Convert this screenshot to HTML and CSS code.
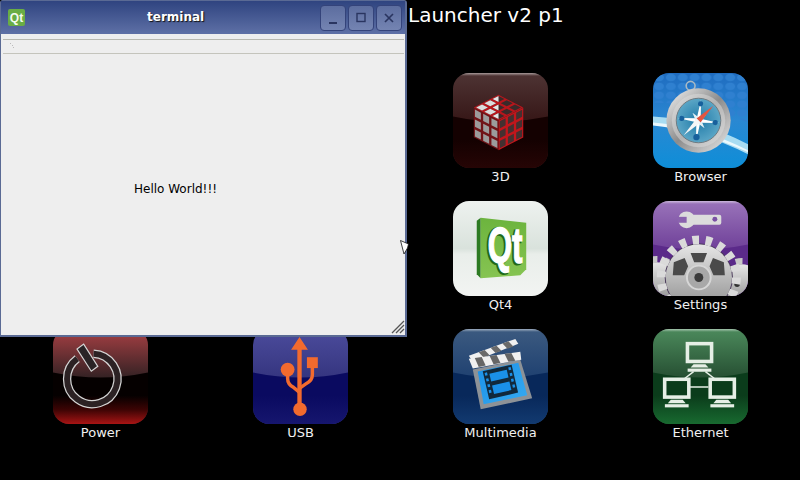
FILE: index.html
```html
<!DOCTYPE html>
<html lang="en">
<head>
<meta charset="utf-8">
<title>Launcher</title>
<link rel="stylesheet" href="styles.css">
</head>
<body>
<svg class="defs" aria-hidden="true">
  <defs>
    <linearGradient id="topEdge" x1="0" y1="0" x2="0" y2="1"><stop offset="0" stop-color="#fff" stop-opacity=".5"/><stop offset="1" stop-color="#fff" stop-opacity="0"/></linearGradient>
    <linearGradient id="silver" x1="0" y1="0" x2="1" y2="1"><stop offset="0" stop-color="#f4f4f4"/><stop offset=".5" stop-color="#8c8c8c"/><stop offset="1" stop-color="#ececec"/></linearGradient>
    <linearGradient id="gearFill" x1="0" y1="0" x2="0" y2="1"><stop offset="0" stop-color="#e6e6e6"/><stop offset="1" stop-color="#8e8e8e"/></linearGradient>
    <g id="cells">
      <rect x=".14" y=".14" width=".72" height=".72"/><rect x="1.14" y=".14" width=".72" height=".72"/><rect x="2.14" y=".14" width=".72" height=".72"/>
      <rect x=".14" y="1.14" width=".72" height=".72"/><rect x="1.14" y="1.14" width=".72" height=".72"/><rect x="2.14" y="1.14" width=".72" height=".72"/>
      <rect x=".14" y="2.14" width=".72" height=".72"/><rect x="1.14" y="2.14" width=".72" height=".72"/><rect x="2.14" y="2.14" width=".72" height=".72"/>
    </g>
    <g id="pc">
      <rect x="1.800" y="1.800" width="24.400" height="18" fill="none" stroke="#e6efe6" stroke-width="3.600"/>
      <path d="M8 22.500H20L23 26H5Z" fill="#e6efe6"/>
      <rect x="2" y="27" width="24" height="3.200" fill="#e6efe6"/>
    </g>
  </defs>
</svg>

<main class="desktop">
  <h1 class="heading">Launcher v2 p1</h1>

  <div class="launcher">
    <div class="slot"></div>
    <div class="slot"></div>
    <div class="app">
      <svg class="tile" viewBox="0 0 96 96" width="95" height="95">
        <defs>
          <linearGradient id="top3d" x1="0" y1="0" x2="0" y2="1"><stop offset="0" stop-color="#4e3434"/><stop offset=".52" stop-color="#361616"/></linearGradient>
          <linearGradient id="low3d" x1="0" y1="0" x2="0" y2="1"><stop offset=".45" stop-color="#140101"/><stop offset="1" stop-color="#260505"/></linearGradient>
        </defs>
        <rect width="96" height="96" fill="url(#top3d)"/>
        <path d="M0 44Q48 54 96 44V96H0Z" fill="url(#low3d)"/>
        <rect width="96" height="3" fill="url(#topEdge)"/>
        <g transform="matrix(8.330 4.300 0 10 21 35)"><rect width="3" height="3" fill="#701418"/><use href="#cells" fill="#9c9c9c"/></g>
        <g transform="matrix(8.330 -4.300 0 10 46 48)"><rect width="3" height="3" fill="#c0161c"/><use href="#cells" fill="#443030"/></g>
        <g transform="matrix(8.330 4.300 -8.330 4.300 46 22)"><rect width="3" height="3" fill="#b8161c"/><use href="#cells" fill="#3a2a2a"/>
          <path d="M.14 1.140H.86V1.860H.14ZM.14 2.140H.86V2.860H.14ZM1.140 2.140H1.860V2.860H1.140Z" fill="#dcdcdc"/>
          <path d="M.14 .14L.14 .86L.86 .86ZM1.140 1.140L1.140 1.860L1.860 1.860ZM2.140 2.140L2.140 2.860L2.860 2.860Z" fill="#e6e6e6"/></g>
      </svg>
      <span class="app-name">3D</span>
    </div>
    <div class="app">
      <svg class="tile" viewBox="0 0 96 96" width="95" height="95">
        <defs>
          <linearGradient id="bgSafari" x1="0" y1="0" x2="0" y2="1"><stop offset="0" stop-color="#1f6cc0"/><stop offset=".5" stop-color="#2a88d2"/><stop offset="1" stop-color="#0e8ed8"/></linearGradient>
          <pattern id="dots" width="12" height="9" patternUnits="userSpaceOnUse"><ellipse cx="6" cy="4.500" rx="5" ry="3.800" fill="#2f80d0"/></pattern>
          <radialGradient id="dial" cx=".5" cy=".5" r=".5"><stop offset="0" stop-color="#1f7aa8"/><stop offset="1" stop-color="#5ba6c6"/></radialGradient>
        </defs>
        <rect width="96" height="96" fill="url(#bgSafari)"/>
        <path d="M0 0H96V50Q50 30 0 30Z" fill="url(#dots)"/>
        <path d="M0 44Q48 47 96 72V82Q48 58 0 52Z" fill="#a8dcf2"/>
        <path d="M0 50Q48 54 96 78V80Q48 58 0 53Z" fill="#eaf8fd"/>
        <circle cx="38" cy="13" r="4.500" fill="none" stroke="#a9b9c4" stroke-width="1.600"/>
        <circle cx="46" cy="48" r="32.500" fill="url(#silver)"/>
        <circle cx="46" cy="48" r="27" fill="#dcdcdc" opacity=".5"/>
        <circle cx="46" cy="48" r="22.500" fill="url(#dial)" stroke="#6d7a82" stroke-width="1"/>
        <g transform="rotate(7 46 48)">
          <path d="M46 27L48 46L67 48L48 50L46 69L44 50L25 48L44 46Z" fill="#fff"/>
          <path d="M39 41L46 45L53 41L49 48L53 55L46 51L39 55L43 48Z" fill="#e4f1f6"/>
          <circle cx="46" cy="31" r="2.600" fill="#17609c"/><circle cx="63" cy="48" r="2.600" fill="#17609c"/><circle cx="46" cy="65" r="3.200" fill="#17609c"/><circle cx="29" cy="48" r="2.600" fill="#17609c"/>
        </g>
        <path d="M61 33L48 50L44 46Z" fill="#e2553f"/>
        <path d="M31 63L44 46L48 50Z" fill="#f6f6f6"/>
      </svg>
      <span class="app-name">Browser</span>
    </div>

    <div class="slot"></div>
    <div class="slot"></div>
    <div class="app">
      <svg class="tile" viewBox="0 0 96 96" width="95" height="95">
        <defs>
          <linearGradient id="bgQt" x1="0" y1="0" x2="0" y2="1"><stop offset="0" stop-color="#eef2ef"/><stop offset=".5" stop-color="#d9e2dc"/><stop offset=".56" stop-color="#e9eeea"/><stop offset="1" stop-color="#f2f4f2"/></linearGradient>
          <linearGradient id="qtGreen" x1="0" y1="0" x2="0" y2="1"><stop offset="0" stop-color="#6cb43e"/><stop offset="1" stop-color="#86c452"/></linearGradient>
        </defs>
        <rect width="96" height="96" fill="url(#bgQt)"/>
        <path d="M24 20L28 17V78L24 74Z" fill="#2c7a22"/>
        <path d="M28 17L74 22V69L68 75L28 78Z" fill="url(#qtGreen)"/>
        <text class="qt-logo-shadow" x="0" y="0" transform="translate(33.500 64) scale(.62 1)">Qt</text>
        <text class="qt-logo" x="0" y="0" transform="translate(35 63) scale(.62 1)">Qt</text>
      </svg>
      <span class="app-name">Qt4</span>
    </div>
    <div class="app">
      <svg class="tile" viewBox="0 0 96 96" width="95" height="95">
        <defs>
          <linearGradient id="bgPurple" x1="0" y1="0" x2="0" y2="1"><stop offset="0" stop-color="#9a74ba"/><stop offset=".52" stop-color="#6e3f98"/></linearGradient>
        </defs>
        <rect width="96" height="96" fill="url(#bgPurple)"/>
        <path d="M0 44Q48 54 96 44V96H0Z" fill="#5b2a8a"/>
        <rect width="96" height="3" fill="url(#topEdge)"/>
        <rect x="38" y="14" width="31" height="10" rx="2" fill="#dcdcdc"/>
        <circle cx="34" cy="19" r="8.500" fill="#dcdcdc"/>
        <rect x="25" y="16" width="9" height="6" fill="#8a62ae"/>
        <circle cx="62.500" cy="18.500" r="2.500" fill="#7a50a4"/>
        <circle cx="4" cy="82" r="20" fill="url(#gearFill)"/>
        <circle cx="4" cy="82" r="23" fill="none" stroke="#c8c8c8" stroke-width="7" stroke-dasharray="7 7.450"/>
        <circle cx="90" cy="84" r="20" fill="url(#gearFill)"/>
        <circle cx="90" cy="84" r="23" fill="none" stroke="#c8c8c8" stroke-width="7" stroke-dasharray="7 7.450"/>
        <circle cx="85" cy="84" r="2.800" fill="#333"/>
        <circle cx="46.300" cy="77.300" r="34.500" fill="#4a3a5a"/>
        <circle cx="46.300" cy="77.300" r="38" fill="none" stroke="#dadada" stroke-width="9" stroke-dasharray="6.600 6.660"/>
        <circle cx="46.300" cy="77.300" r="33.500" fill="url(#gearFill)"/>
        <path d="M38 52.500H54.600L51 62H41.600ZM21 62L32 57.500L35.500 66L31.500 75H20ZM71.600 62L60.600 57.500L57.100 66L61.100 75H72.600Z" fill="#4a4a4a"/>
        <circle cx="46.300" cy="77.300" r="12" fill="#a8a8a8" stroke="#d6d6d6" stroke-width="2"/>
        <circle cx="46.300" cy="77.300" r="4.500" fill="#3a3a3a"/>
      </svg>
      <span class="app-name">Settings</span>
    </div>

    <div class="app">
      <svg class="tile" viewBox="0 0 96 96" width="95" height="95">
        <defs>
          <linearGradient id="topRed" x1="0" y1="0" x2="0" y2="1"><stop offset="0" stop-color="#a84044"/><stop offset=".54" stop-color="#2e2022"/></linearGradient>
          <linearGradient id="lowRed" x1="0" y1="0" x2="0" y2="1"><stop offset=".45" stop-color="#050000"/><stop offset=".72" stop-color="#3c0404"/><stop offset="1" stop-color="#a81414"/></linearGradient>
        </defs>
        <rect width="96" height="96" fill="url(#topRed)"/>
        <path d="M0 44Q48 54 96 44V96H0Z" fill="url(#lowRed)"/>
        <path d="M24.500 30A25.500 25.500 0 1 0 41 25" fill="none" stroke="#d4d4d4" stroke-width="8.500"/>
        <path d="M24.500 30A25.500 25.500 0 1 0 41 25" fill="none" stroke="#2c2224" stroke-width="6"/>
        <path d="M24.300 20.300L31 15.300L45.300 37.700L38.700 42.700Z" fill="#2a2426" stroke="#d4d4d4" stroke-width="1.200"/>
      </svg>
      <span class="app-name">Power</span>
    </div>
    <div class="app">
      <svg class="tile" viewBox="0 0 96 96" width="95" height="95">
        <defs>
          <linearGradient id="topNavy" x1="0" y1="0" x2="0" y2="1"><stop offset="0" stop-color="#4c4c9c"/><stop offset=".54" stop-color="#34347e"/></linearGradient>
          <linearGradient id="lowNavy" x1="0" y1="0" x2="0" y2="1"><stop offset=".45" stop-color="#0a0a60"/><stop offset="1" stop-color="#16166e"/></linearGradient>
        </defs>
        <rect width="96" height="96" fill="url(#topNavy)"/>
        <path d="M0 44Q48 54 96 44V96H0Z" fill="url(#lowNavy)"/>
        <g fill="#f26a2e">
          <path d="M47 8L55.500 21H49.200V81H44.800V21H38.500Z"/>
          <circle cx="47.500" cy="81" r="6.800"/>
          <circle cx="35" cy="41" r="7"/>
          <rect x="54.500" y="28.500" width="11" height="11"/>
        </g>
        <path d="M35 44V50Q35 56 41 59L47 64" fill="none" stroke="#f26a2e" stroke-width="3.500"/>
        <path d="M60 38V46Q60 52 54 55L47 60" fill="none" stroke="#f26a2e" stroke-width="3.500"/>
      </svg>
      <span class="app-name">USB</span>
    </div>
    <div class="app">
      <svg class="tile" viewBox="0 0 96 96" width="95" height="95">
        <defs>
          <linearGradient id="topBlue" x1="0" y1="0" x2="0" y2="1"><stop offset="0" stop-color="#3c5a80"/><stop offset=".54" stop-color="#1e4070"/></linearGradient>
          <linearGradient id="lowBlue" x1="0" y1="0" x2="0" y2="1"><stop offset=".45" stop-color="#08285a"/><stop offset="1" stop-color="#123a70"/></linearGradient>
          <linearGradient id="frameBlue" x1="0" y1="0" x2="1" y2="1"><stop offset="0" stop-color="#1a90e8"/><stop offset="1" stop-color="#36aaf0"/></linearGradient>
        </defs>
        <rect width="96" height="96" fill="url(#topBlue)"/>
        <path d="M0 44Q48 54 96 44V96H0Z" fill="url(#lowBlue)"/>
        <rect width="96" height="3" fill="url(#topEdge)"/>
        <path d="M20 41L68 31L80 70L28 81Z" fill="#8d9297"/>
        <path d="M25 43L66 34L75 67L31 76Z" fill="url(#frameBlue)"/>
        <path d="M16 27L63 10L66 15L20 33Z" fill="#f0f0f0"/>
        <path d="M26 23.400L32 21.200L37 26.500L31 28.700ZM38 19L44 16.800L49 22.100L43 24.300ZM50 14.700L56 12.500L61 17.700L55 20Z" fill="#6a6a6a"/>
        <path d="M16 30L68 23L69 31L20 40Z" fill="#f0f0f0"/>
        <path d="M22 29.200L29 28.200L33 37L26 38.300ZM37 27.200L44 26.200L48 34.300L41 35.500ZM52 25.100L59 24.200L63 32L56 33.200Z" fill="#666"/>
        <g transform="rotate(-13 48 54)">
          <rect x="33" y="39" width="30" height="29" fill="#11293c"/>
          <rect x="39" y="43" width="18" height="8" fill="#1a90e8"/>
          <rect x="39" y="55" width="18" height="9" fill="#1a90e8"/>
          <path d="M34.500 41h2.500v3h-2.500zM34.500 47h2.500v3h-2.500zM34.500 53h2.500v3h-2.500zM34.500 59h2.500v3h-2.500zM59 41h2.500v3H59zM59 47h2.500v3H59zM59 53h2.500v3H59zM59 59h2.500v3H59z" fill="#1a90e8"/>
        </g>
      </svg>
      <span class="app-name">Multimedia</span>
    </div>
    <div class="app">
      <svg class="tile" viewBox="0 0 96 96" width="95" height="95">
        <defs>
          <linearGradient id="topGreen" x1="0" y1="0" x2="0" y2="1"><stop offset="0" stop-color="#4c8a5c"/><stop offset=".54" stop-color="#244c30"/></linearGradient>
          <linearGradient id="lowGreen" x1="0" y1="0" x2="0" y2="1"><stop offset=".45" stop-color="#0b3c1b"/><stop offset="1" stop-color="#186a30"/></linearGradient>
        </defs>
        <rect width="96" height="96" fill="url(#topGreen)"/>
        <path d="M0 44Q48 54 96 44V96H0Z" fill="url(#lowGreen)"/>
        <rect width="96" height="3" fill="url(#topEdge)"/>
        <path d="M41 43L32 50M53 43L62 50M37 58.500H56" stroke="#e6efe6" stroke-width="1.500" fill="none"/>
        <use href="#pc" x="33" y="13"/>
        <use href="#pc" x="10" y="49"/>
        <use href="#pc" x="56" y="49"/>
      </svg>
      <span class="app-name">Ethernet</span>
    </div>
  </div>

  <section class="window">
    <header class="titlebar">
      <span class="qt-badge">Qt</span>
      <span class="window-title">terminal</span>
      <div class="win-buttons">
        <button class="win-btn" aria-label="Minimize"><svg viewBox="0 0 26 26" width="26" height="26"><rect x="9" y="17" width="8" height="2" fill="#2a3560"/></svg></button>
        <button class="win-btn" aria-label="Maximize"><svg viewBox="0 0 26 26" width="26" height="26"><rect x="9" y="8.500" width="8" height="8" fill="none" stroke="#2a3560" stroke-width="1.400"/></svg></button>
        <button class="win-btn" aria-label="Close"><svg viewBox="0 0 26 26" width="26" height="26"><path d="M9 9L17 17M17 9L9 17" fill="none" stroke="#2a3560" stroke-width="1.700"/></svg></button>
      </div>
    </header>
    <div class="menubar"></div>
    <div class="toolbar">
      <svg class="toolbar-grip" viewBox="0 0 6 7" width="6" height="7"><path d="M1 0h1v1H1zM3 2h1v1H3zM4 4h1v1H4z" fill="#bbb"/></svg>
    </div>
    <div class="content">Hello World!!!</div>
    <div class="statusbar">
      <svg class="size-grip" viewBox="0 0 14 14" width="14" height="14"><path d="M1 13L13 1M5 13L13 5M9 13L13 9" stroke="#555" stroke-width="1.300" fill="none"/></svg>
    </div>
  </section>

  <svg class="cursor" viewBox="0 0 9 15" width="9" height="15"><path d="M.5 .5L8.500 4L7.500 8L4 14Z" fill="#fff" stroke="#111" stroke-width=".8"/></svg>
</main>
</body>
</html>
```

FILE: styles.css
```css
* {
  box-sizing: border-box;
}

html,
body {
  margin: 0;
  width: 800px;
  height: 480px;
  overflow: hidden;
  background: #000;
}

.defs {
  position: absolute;
  width: 0;
  height: 0;
}

.desktop {
  position: relative;
  width: 800px;
  height: 480px;
  background: #000;
  color: #fff;
  font-family: "DejaVu Sans", sans-serif;
}

.heading {
  margin: 0;
  height: 73px;
  padding: 2px 0 0 408px;
  font-size: 20px;
  line-height: 26px;
  font-weight: 400;
  color: #fff;
}

.launcher {
  display: grid;
  grid-template-columns: repeat(4, 200px);
  grid-auto-rows: 128px;
  padding-left: 0.5px;
}

.app {
  display: flex;
  flex-direction: column;
  align-items: center;
}

.tile {
  display: block;
  flex: none;
  border-radius: 16px;
}

.app-name {
  margin-top: 1px;
  font-size: 13px;
  line-height: 16px;
  color: #f0f0f0;
}

.qt-logo,
.qt-logo-shadow {
  font-family: "Liberation Sans", sans-serif;
  font-weight: 700;
  font-size: 51px;
  fill: #fff;
  stroke: #fff;
  stroke-width: 1.5px;
}

.qt-logo-shadow {
  fill: #1f6a1a;
  stroke: #1f6a1a;
  stroke-width: 3px;
}

.window {
  position: absolute;
  left: 0;
  top: 0;
  width: 407px;
  height: 337px;
  display: flex;
  flex-direction: column;
  background: #eeeeee;
  border: 1px solid #5a6a94;
  border-width: 1px 2px 2px 1px;
  border-radius: 3px 3px 0 0;
  color: #000;
}

.titlebar {
  position: relative;
  flex: none;
  height: 33px;
  display: flex;
  align-items: center;
  padding: 0 3px 0 7px;
  background: linear-gradient(#2f4480, #5e70a6);
}

.qt-badge {
  width: 17px;
  height: 17px;
  display: flex;
  align-items: center;
  justify-content: center;
  border-radius: 2px;
  background: #69ad45;
  color: #f4fbef;
  font-family: "Liberation Sans", sans-serif;
  font-size: 12px;
  font-weight: 700;
}

.window-title {
  position: absolute;
  left: 146px;
  top: 8px;
  font-size: 12px;
  line-height: 16px;
  font-weight: 700;
  color: #fff;
  text-shadow: 1px 1px 1px #111;
}

.win-buttons {
  display: flex;
  gap: 2px;
  margin-left: auto;
}

.win-btn {
  width: 26px;
  height: 26px;
  padding: 0;
  border: 1px solid #34437a;
  border-radius: 4px;
  background: linear-gradient(#5c6d9f, #7484b2);
  display: flex;
  align-items: center;
  justify-content: center;
}

.win-btn svg {
  flex: none;
  margin: -1px;
}

.menubar {
  flex: none;
  height: 5px;
  margin: 0 2px;
  background: #eeeeee;
}

.toolbar {
  flex: none;
  height: 15px;
  margin: 0 1px 0 2px;
  padding: 3px 0 0 6px;
  border-top: 1px solid #b8b8b0;
  border-bottom: 1px solid #c4c4bc;
}

.toolbar-grip {
  display: block;
}

.content {
  flex: 1;
  display: flex;
  align-items: center;
  justify-content: center;
  padding: 4px 55px 0 0;
  font-size: 12px;
}

.statusbar {
  flex: none;
  height: 15px;
  display: flex;
  justify-content: flex-end;
}

.cursor {
  position: absolute;
  left: 400px;
  top: 240px;
}
```
